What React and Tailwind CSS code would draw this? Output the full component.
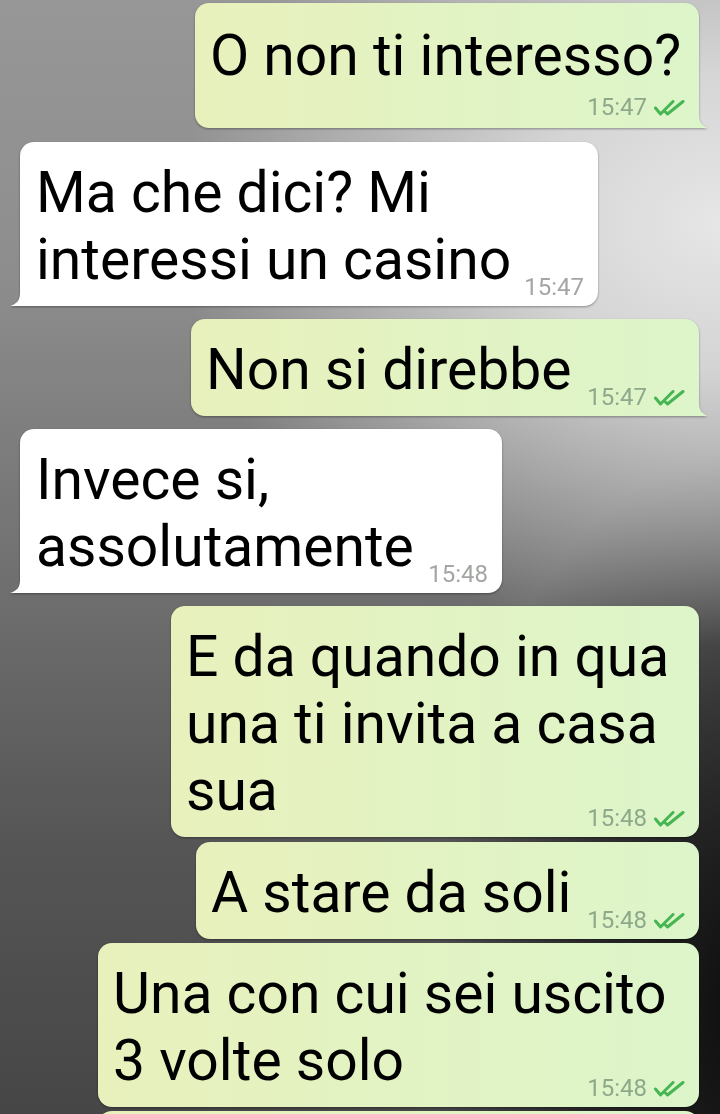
const OUT_BG = 'bg-gradient-to-r from-[#e8f1bc] to-[#ddf5ca]';

const Ticks = () => (
  <svg width="32" height="16" viewBox="0 0 32 16" className="ml-[6px] mb-[3px]">
    <path d="M2.5 8 L7.5 14 L20 1.5" stroke="#45b652" strokeWidth="3" fill="none" strokeLinecap="round" strokeLinejoin="round" />
    <path d="M12.5 12 L14.5 14 L30 1.5" stroke="#45b652" strokeWidth="3" fill="none" strokeLinecap="round" strokeLinejoin="round" />
  </svg>
);

const Time = ({ value, out }) => (
  <div className="flex items-end shrink-0">
    <span className={`text-[24px] leading-[24px] ${out ? 'text-[#8da88a]' : 'text-[#a3a6a3]'}`}>{value}</span>
    {out && <Ticks />}
  </div>
);

const OutTail = () => (
  <svg width="9" height="13" viewBox="0 0 9 13" className="absolute left-full bottom-0">
    <path d="M0 0 C0 7 3 11 9 13 L0 13 Z" fill="#ddf5ca" />
  </svg>
);

const InTail = () => (
  <svg width="10" height="13" viewBox="0 0 10 13" className="absolute right-full bottom-0">
    <path d="M10 0 C10 7 7 11 0 13 L10 13 Z" fill="#ffffff" />
  </svg>
);

function Bubble({ out, tail, w, time, stacked, mt, children }) {
  const side = out ? 'self-end mr-[21px]' : 'self-start ml-[20px]';
  const corner = tail ? (out ? 'rounded-[14px] rounded-br-none' : 'rounded-[14px] rounded-bl-none') : 'rounded-[14px]';
  const pad = stacked ? 'pt-[19px] pb-[9px]' : 'pt-[17px] pb-[7px]';
  return (
    <div className={`relative shrink-0 ${side} ${mt} drop-shadow-[0_1px_1px_rgba(0,0,0,0.35)]`} style={{ width: w }}>
      <div className={`${corner} ${out ? OUT_BG : 'bg-white'} ${out ? 'pl-[15px]' : 'pl-[16px]'} pr-[14px] ${pad}`}>
        <div className="flex flex-col">
          <div className="text-[57px] leading-[67px] text-black whitespace-nowrap">{children}</div>
          <div className={`self-end ${stacked ? 'mt-[6px]' : '-mt-[18px]'}`}>
            <Time value={time} out={out} />
          </div>
        </div>
      </div>
      {tail && (out ? <OutTail /> : <InTail />)}
    </div>
  );
}

export default function App() {
  return (
    <div className="w-[720px] h-[1114px] overflow-hidden flex flex-col pt-[3px] font-[family-name:Roboto,sans-serif] bg-[radial-gradient(ellipse_75%_38%_at_100%_20%,rgba(230,230,230,1)_0%,rgba(225,225,225,0.85)_35%,rgba(215,215,215,0)_100%),radial-gradient(ellipse_45%_50%_at_105%_90%,rgba(0,0,0,0.85)_0%,rgba(0,0,0,0.45)_55%,rgba(0,0,0,0)_100%),linear-gradient(180deg,#979797_0%,#8d8d8d_25%,#727272_50%,#565656_75%,#464646_100%)]">
      <Bubble out tail stacked w={504} time="15:47" mt="">
        O non ti interesso?
      </Bubble>
      <Bubble tail w={578} time="15:47" mt="mt-[14px]">
        Ma che dici? Mi
        <br />
        interessi un casino
      </Bubble>
      <Bubble out tail w={508} time="15:47" mt="mt-[13px]">
        Non si direbbe
      </Bubble>
      <Bubble tail w={482} time="15:48" mt="mt-[13px]">
        Invece si,
        <br />
        assolutamente
      </Bubble>
      <Bubble out w={528} time="15:48" mt="mt-[13px]">
        E da quando in qua
        <br />
        una ti invita a casa
        <br />
        sua
      </Bubble>
      <Bubble out w={503} time="15:48" mt="mt-[5px]">
        A stare da soli
      </Bubble>
      <Bubble out w={601} time="15:48" mt="mt-[4px]">
        Una con cui sei uscito
        <br />
        3 volte solo
      </Bubble>
      <div className={`self-end mr-[21px] mt-[4px] w-[601px] h-[60px] shrink-0 rounded-[14px] ${OUT_BG} drop-shadow-[0_1px_1px_rgba(0,0,0,0.35)]`} />
    </div>
  );
}
